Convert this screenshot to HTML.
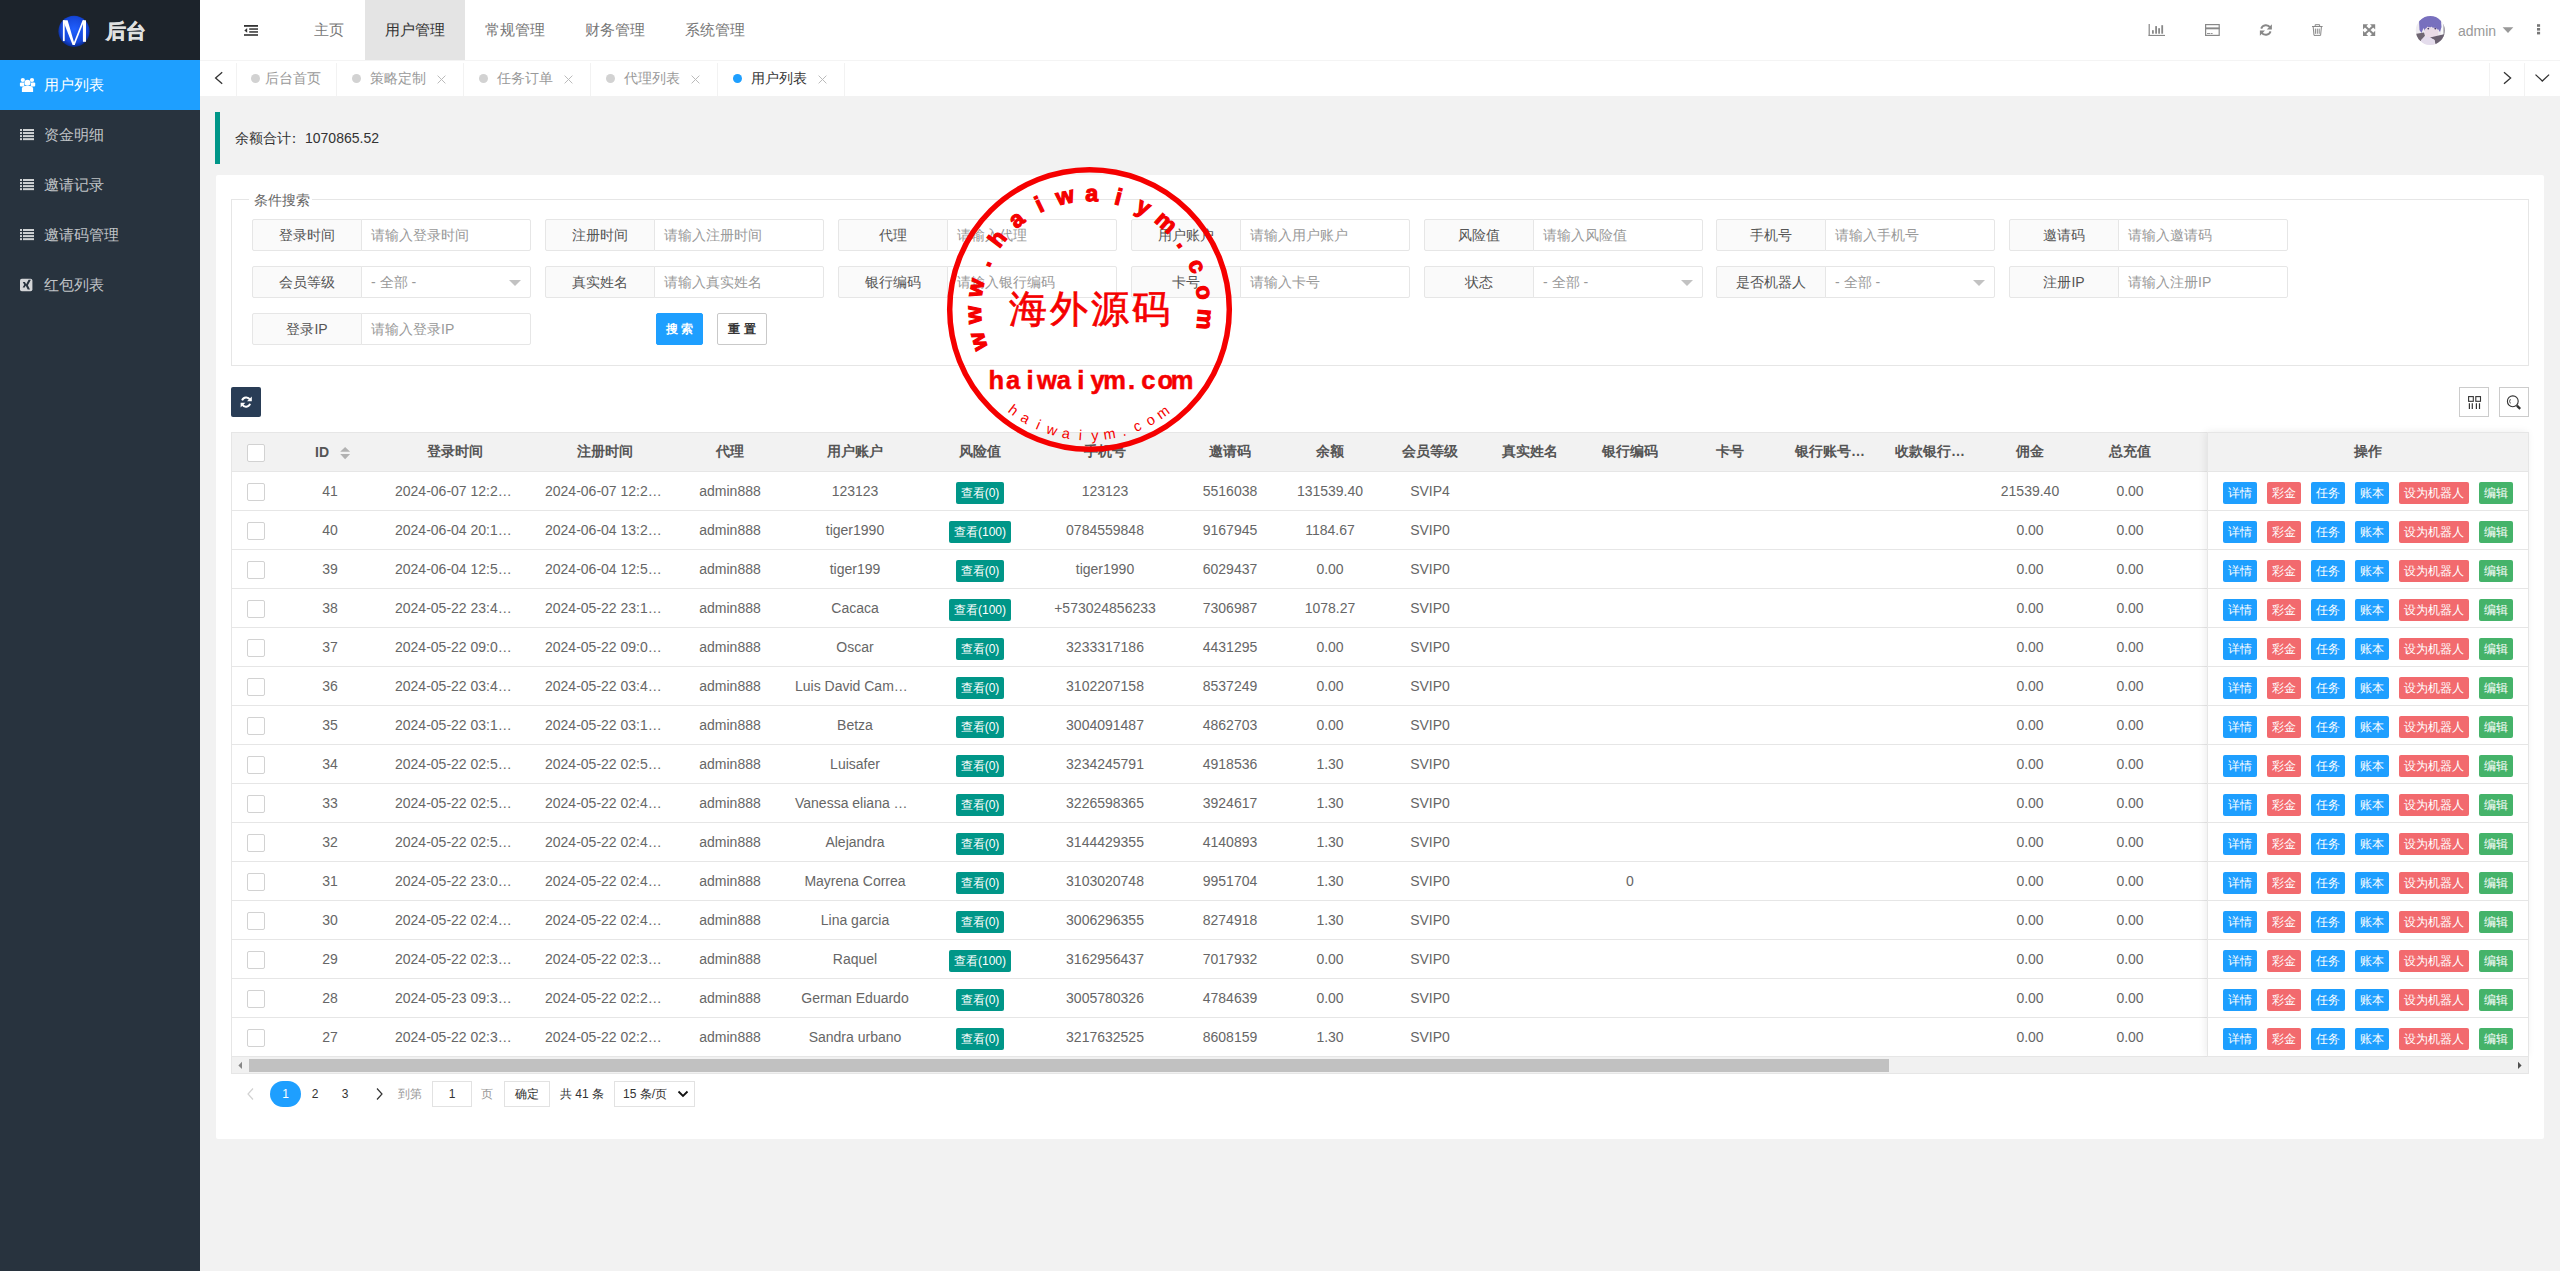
<!DOCTYPE html>
<html><head><meta charset="utf-8"><style>
*{box-sizing:border-box;margin:0;padding:0}
html,body{width:2560px;height:1271px;overflow:hidden}
body{background:#f2f2f2;font-family:"Liberation Sans",sans-serif;font-size:14px;color:#666;position:relative}
.a{position:absolute}
#side{left:0;top:0;width:200px;height:1271px;background:#28333e}
#logo{left:0;top:0;width:200px;height:60px;background:#1c232b}
#logot{left:106px;top:17px;font-size:20px;font-weight:bold;color:#e0e0e0;line-height:28px;-webkit-text-stroke:0.6px #e0e0e0}
.mi{position:absolute;left:0;width:200px;height:50px;color:rgba(255,255,255,.72);font-size:15px;line-height:50px}
.mi span{position:absolute;left:44px;top:0}
.mi svg{position:absolute;left:0;top:0}
.mi.on{background:#1e9fff;color:#fff}
#hdr{left:200px;top:0;width:2360px;height:61px;background:#fff;border-bottom:1px solid #f4f4f4}
.nav{position:absolute;top:0;height:60px;line-height:60px;font-size:15px;color:#777;text-align:center}
.nav.on{background:#e4e4e4;color:#333}
#tabs{left:200px;top:61px;width:2360px;height:35px;background:#fff}
.tsep{position:absolute;top:2px;width:1px;height:33px;background:#f2f2f2}
.tt{position:absolute;top:-1px;line-height:36px;font-size:14px;color:#999;white-space:nowrap}
.td{position:absolute;top:14px;width:9px;height:9px;border-radius:50%;background:#d2d2d2}
#quote{left:215px;top:112px;width:2330px;height:52px;border-left:5px solid #009688;background:#f2f2f2;color:#333;font-size:14px;line-height:52px;padding-left:15px}
#card{left:216px;top:175px;width:2328px;height:964px;background:#fff;border-radius:2px}
#fs{left:231px;top:199px;width:2298px;height:167px;border:1px solid #e6e6e6}
#legend{left:249px;top:190px;padding:0 2px 0 5px;background:#fff;font-size:14px;color:#666;line-height:20px}
.grp{position:absolute;width:279px;height:32px}
.lb{position:absolute;left:0;top:0;width:110px;height:32px;border:1px solid #e6e6e6;background:#fafafa;text-align:center;line-height:30px;color:#555;border-radius:2px 0 0 2px}
.in{position:absolute;left:109px;top:0;width:170px;height:32px;border:1px solid #e6e6e6;background:#fff;line-height:30px;padding-left:9px;color:#999;border-radius:0 2px 2px 0;white-space:nowrap;overflow:hidden}
.car{position:absolute;right:9px;top:13px;width:0;height:0;border-left:6px solid transparent;border-right:6px solid transparent;border-top:6px solid #c2c2c2}
.btn{position:absolute;height:32px;line-height:30px;text-align:center;font-size:12px;border-radius:2px;font-weight:bold}
.tb{position:absolute;left:232px;width:2296px;overflow:hidden}
.th{position:absolute;height:39px;line-height:39px;text-align:center;font-weight:bold;color:#555;white-space:nowrap}
.tc{position:absolute;height:38px;line-height:38px;text-align:center;color:#666;white-space:nowrap}
.hl{position:absolute;left:0;width:2296px;height:1px;background:#e6e6e6}
.cb{position:absolute;width:18px;height:18px;border:1px solid #d2d2d2;background:#fff;border-radius:2px}
.bdg{position:absolute;height:22px;line-height:22px;font-size:12px;color:#fff;background:#009688;border-radius:2px;text-align:center}
.ob{position:absolute;height:22px;line-height:22px;font-size:12px;color:#fff;border-radius:2px;text-align:center}
.b1{background:#1e9fff}.b2{background:#f26a6e}.b3{background:#45b36a}
</style></head><body>
<div id="side" class="a">
<div id="logo" class="a"></div>
<svg class="a" style="left:56px;top:13px" width="36" height="36" viewBox="0 0 36 36">
<defs><radialGradient id="lg" cx="50%" cy="45%" r="55%"><stop offset="0" stop-color="#2060ff"/><stop offset=".75" stop-color="#1546d8"/><stop offset="1" stop-color="#0a2a8a"/></radialGradient></defs>
<circle cx="18" cy="18.3" r="15.6" fill="url(#lg)"/>
<g fill="#fff"><rect x="6.9" y="7.3" width="1.8" height="20.8"/><path d="M6.9 7.3 L11.6 7.3 L18.8 31.9 L16.6 31.9 Z"/><path d="M16.9 31.9 L18.7 31.9 L28.4 7.3 L26.6 7.3 Z"/><rect x="26.9" y="7.3" width="3.1" height="21.5"/></g>
</svg>
<div id="logot" class="a">后台</div>
<div class="mi on" style="top:60px"><svg width="50" height="50"><g fill="#fff"><circle cx="22.8" cy="80" r="2.1" transform="translate(0,-60)"/><circle cx="32" cy="20" r="2.1"/><circle cx="27.5" cy="22.8" r="3"/><rect x="19.9" y="22.6" width="4.4" height="4" rx="1"/><rect x="30.8" y="22.6" width="4.4" height="4" rx="1"/><path d="M21.9 32 L21.9 28.6 Q22 26.2 24.5 26 L30.5 26 Q33 26.2 33.1 28.6 L33.1 32 Z"/></g></svg><span>用户列表</span></div>
<div class="mi" style="top:110px"><svg width="50" height="50"><g fill="rgba(255,255,255,.78)"><rect x="20" y="19.00" width="2" height="2"/><rect x="23" y="19.00" width="11" height="2"/><rect x="20" y="22.05" width="2" height="2"/><rect x="23" y="22.05" width="11" height="2"/><rect x="20" y="25.10" width="2" height="2"/><rect x="23" y="25.10" width="11" height="2"/><rect x="20" y="28.15" width="2" height="2"/><rect x="23" y="28.15" width="11" height="2"/></g></svg><span>资金明细</span></div>
<div class="mi" style="top:160px"><svg width="50" height="50"><g fill="rgba(255,255,255,.78)"><rect x="20" y="19.00" width="2" height="2"/><rect x="23" y="19.00" width="11" height="2"/><rect x="20" y="22.05" width="2" height="2"/><rect x="23" y="22.05" width="11" height="2"/><rect x="20" y="25.10" width="2" height="2"/><rect x="23" y="25.10" width="11" height="2"/><rect x="20" y="28.15" width="2" height="2"/><rect x="23" y="28.15" width="11" height="2"/></g></svg><span>邀请记录</span></div>
<div class="mi" style="top:210px"><svg width="50" height="50"><g fill="rgba(255,255,255,.78)"><rect x="20" y="19.00" width="2" height="2"/><rect x="23" y="19.00" width="11" height="2"/><rect x="20" y="22.05" width="2" height="2"/><rect x="23" y="22.05" width="11" height="2"/><rect x="20" y="25.10" width="2" height="2"/><rect x="23" y="25.10" width="11" height="2"/><rect x="20" y="28.15" width="2" height="2"/><rect x="23" y="28.15" width="11" height="2"/></g></svg><span>邀请码管理</span></div>
<div class="mi" style="top:260px"><svg width="50" height="50"><rect x="20" y="18.8" width="12.4" height="12.4" rx="1.8" fill="rgba(255,255,255,.8)"/><path d="M22.8 22 L24.9 22 L26.3 24.6 L24.7 27.6 L22.6 27.6 L24.2 24.7 Z M28.6 19.8 L30.9 19.8 L27.9 25.2 L30 29.4 L27.7 29.4 L25.6 25.2 Z" fill="#28333e"/></svg><span>红包列表</span></div>
</div>
<div id="hdr" class="a">
<svg class="a" style="left:40px;top:20px" width="24" height="20"><g fill="#333"><rect x="4" y="5" width="14" height="1.8"/><rect x="9.2" y="8.3" width="8.8" height="1.5"/><rect x="9.2" y="11.2" width="8.8" height="1.5"/><rect x="4" y="14.2" width="14" height="1.6"/><path d="M7.2 8.1 L7.2 12.8 L4.3 10.45 Z"/></g></svg>
<div class="nav" style="left:93px;width:72px">主页</div>
<div class="nav on" style="left:165px;width:100px">用户管理</div>
<div class="nav" style="left:265px;width:100px">常规管理</div>
<div class="nav" style="left:365px;width:100px">财务管理</div>
<div class="nav" style="left:465px;width:100px">系统管理</div>
<svg class="a" style="left:1940px;top:15px" width="420" height="32" viewBox="2140 15 420 32">
<g fill="#888">
<rect x="2148.6" y="24" width="1.2" height="12"/><rect x="2148.6" y="34.9" width="16.4" height="1.1"/>
<rect x="2152" y="30.2" width="1.8" height="3.5"/><rect x="2155.2" y="26.1" width="1.8" height="7.6"/><rect x="2158.2" y="28.2" width="1.8" height="5.5"/><rect x="2161.3" y="25.2" width="1.8" height="8.5"/>
</g>
<g fill="none" stroke="#888" stroke-width="1.2">
<rect x="2205.6" y="24.6" width="13.6" height="10.8"/>
</g>
<rect x="2205.2" y="27.4" width="14.4" height="1.9" fill="#888"/>
<rect x="2207" y="33" width="3" height="0.9" fill="#888"/><rect x="2210.6" y="33" width="2" height="0.9" fill="#888"/>
<g fill="none" stroke="#888" stroke-width="1.9">
<path d="M2261.2 28.6 A5 5 0 0 1 2270.2 27.6"/>
<path d="M2270.6 31.4 A5 5 0 0 1 2261.6 32.4"/>
</g>
<path d="M2271.9 24.2 L2271.9 29.4 L2266.8 29.4 Z" fill="#888"/>
<path d="M2259.9 35.8 L2259.9 30.6 L2265 30.6 Z" fill="#888"/>
<g fill="none" stroke="#888" stroke-width="1">
<path d="M2313.2 27 L2314 35.4 L2320.6 35.4 L2321.4 27"/>
<path d="M2312 26.5 L2322.6 26.5"/>
<path d="M2315.2 26.4 L2315.2 24.7 L2319.6 24.7 L2319.6 26.4"/>
<path d="M2315.4 28.6 L2315.4 33.8 M2317.3 28.6 L2317.3 33.8 M2319.2 28.6 L2319.2 33.8"/>
</g>
<g fill="#888">
<path d="M2363 24.2 L2368.2 24.2 L2363 29.4 Z"/><path d="M2375.2 24.2 L2370 24.2 L2375.2 29.4 Z"/><path d="M2363 35.9 L2368.2 35.9 L2363 30.7 Z"/><path d="M2375.2 35.9 L2370 35.9 L2375.2 30.7 Z"/>
<path d="M2364.6 25.8 L2373.6 34.3 M2373.6 25.8 L2364.6 34.3" stroke="#888" stroke-width="2"/>
</g>
<defs><clipPath id="av"><circle cx="2430.3" cy="30.6" r="14.5"/></clipPath>
<linearGradient id="avg" x1="0" y1="0" x2="0" y2="1"><stop offset="0" stop-color="#5a55b8"/><stop offset=".45" stop-color="#7068c0"/><stop offset=".55" stop-color="#e8dde6"/><stop offset="1" stop-color="#f4f0f4"/></linearGradient></defs>
<g clip-path="url(#av)">
<rect x="2414" y="14" width="34" height="34" fill="#eeebf0"/>
<path d="M2441.0 23.0 2445.0 23.0 2445.0 35.0 2441.0 35.0 Z" fill="#f8f8fa"/>
<path d="M2443.5 24.0 2445.0 24.0 2445.0 37.0 2443.5 37.0 Z" fill="#8a8590"/>
<path d="M2419.0 21.0 2424.0 16.5 2430.0 15.5 2437.0 16.5 2441.0 21.0 2441.5 27.0 2440.0 32.0 2438.0 29.0 2437.0 31.5 2435.5 27.5 2433.5 30.0 2431.5 26.5 2429.5 29.5 2427.5 26.5 2425.0 31.0 2423.5 28.0 2421.5 33.0 2419.5 30.0 Z" fill="#7870be"/>
<path d="M2425.0 29.0 2428.0 27.0 2432.0 27.5 2436.0 28.0 2438.5 30.5 2438.0 36.0 2433.0 39.0 2427.0 38.0 2424.5 34.0 Z" fill="#e9dbe6"/>
<circle cx="2428.3" cy="28.6" r="0.9" fill="#4a3f6a"/><circle cx="2435.3" cy="28.6" r="0.9" fill="#4a3f6a"/>
<path d="M2415.0 34.0 2424.0 32.5 2425.0 36.0 2421.0 41.0 2416.0 40.0 Z" fill="#6f6672"/>
<path d="M2430.0 37.5 2445.0 34.0 2445.0 41.0 2436.0 46.0 2434.5 40.0 Z" fill="#6a6070"/>
<path d="M2421.0 40.0 2425.0 36.0 2430.0 37.5 2434.5 40.0 2435.0 46.0 2421.0 46.0 Z" fill="#e4dcec"/>
</g>
<path d="M2502.6 27.3 L2513.3 27.3 L2508 32.9 Z" fill="#999"/>
<g fill="#777"><rect x="2537" y="24.2" width="3.1" height="2.6"/><rect x="2537" y="28" width="3.1" height="2.6"/><rect x="2537" y="31.8" width="3.1" height="2.6"/></g>
</svg>
<div class="a" style="left:2258px;top:21px;font-size:14px;color:#999;line-height:20px">admin</div>
</div>
<div id="tabs" class="a">
<svg class="a" style="left:10px;top:7px" width="20" height="20"><path d="M12.2 4.3 L5.6 10 L12.2 15.7" fill="none" stroke="#333" stroke-width="1.3"/></svg>
<div class="tsep" style="left:36px"></div>
<div class="tsep" style="left:136px"></div>
<div class="tsep" style="left:263px"></div>
<div class="tsep" style="left:390px"></div>
<div class="tsep" style="left:517px"></div>
<div class="tsep" style="left:644px"></div>
<div class="td" style="left:51px;top:13px;"></div>
<div class="tt" style="left:65px;">后台首页</div>
<div class="td" style="left:152px;top:13px;"></div>
<div class="tt" style="left:170px;">策略定制</div>
<svg class="a" style="left:237px;top:14px" width="9" height="9"><path d="M0.6 0.6 L8.4 8.4 M8.4 0.6 L0.6 8.4" stroke="#bbb" stroke-width="1"/></svg>
<div class="td" style="left:279px;top:13px;"></div>
<div class="tt" style="left:297px;">任务订单</div>
<svg class="a" style="left:364px;top:14px" width="9" height="9"><path d="M0.6 0.6 L8.4 8.4 M8.4 0.6 L0.6 8.4" stroke="#bbb" stroke-width="1"/></svg>
<div class="td" style="left:406px;top:13px;"></div>
<div class="tt" style="left:424px;">代理列表</div>
<svg class="a" style="left:491px;top:14px" width="9" height="9"><path d="M0.6 0.6 L8.4 8.4 M8.4 0.6 L0.6 8.4" stroke="#bbb" stroke-width="1"/></svg>
<div class="td" style="left:533px;top:13px;background:#1e9fff"></div>
<div class="tt" style="left:551px;color:#333">用户列表</div>
<svg class="a" style="left:618px;top:14px" width="9" height="9"><path d="M0.6 0.6 L8.4 8.4 M8.4 0.6 L0.6 8.4" stroke="#bbb" stroke-width="1"/></svg>
<div class="tsep" style="left:2289px"></div><div class="tsep" style="left:2324px"></div>
<svg class="a" style="left:2297px;top:7px" width="20" height="20"><path d="M7 4.3 L13.6 10 L7 15.7" fill="none" stroke="#333" stroke-width="1.3"/></svg>
<svg class="a" style="left:2332px;top:7px" width="20" height="20"><path d="M3.5 6.6 L10.3 13 L17.1 6.6" fill="none" stroke="#333" stroke-width="1.3"/></svg>
</div>
<div id="quote" class="a">余额合计<span style="position:relative;left:-4px">：</span>1070865.52</div>
<div id="card" class="a"></div>
<div id="fs" class="a"></div>
<div id="legend" class="a">条件搜索</div>
<div class="grp" style="left:252px;top:219px"><div class="lb">登录时间</div><div class="in">请输入登录时间</div></div>
<div class="grp" style="left:545px;top:219px"><div class="lb">注册时间</div><div class="in">请输入注册时间</div></div>
<div class="grp" style="left:838px;top:219px"><div class="lb">代理</div><div class="in">请输入代理</div></div>
<div class="grp" style="left:1131px;top:219px"><div class="lb">用户账户</div><div class="in">请输入用户账户</div></div>
<div class="grp" style="left:1424px;top:219px"><div class="lb">风险值</div><div class="in">请输入风险值</div></div>
<div class="grp" style="left:1716px;top:219px"><div class="lb">手机号</div><div class="in">请输入手机号</div></div>
<div class="grp" style="left:2009px;top:219px"><div class="lb">邀请码</div><div class="in">请输入邀请码</div></div>
<div class="grp" style="left:252px;top:266px"><div class="lb">会员等级</div><div class="in">- 全部 -<i class=car></i></div></div>
<div class="grp" style="left:545px;top:266px"><div class="lb">真实姓名</div><div class="in">请输入真实姓名</div></div>
<div class="grp" style="left:838px;top:266px"><div class="lb">银行编码</div><div class="in">请输入银行编码</div></div>
<div class="grp" style="left:1131px;top:266px"><div class="lb">卡号</div><div class="in">请输入卡号</div></div>
<div class="grp" style="left:1424px;top:266px"><div class="lb">状态</div><div class="in">- 全部 -<i class=car></i></div></div>
<div class="grp" style="left:1716px;top:266px"><div class="lb">是否机器人</div><div class="in">- 全部 -<i class=car></i></div></div>
<div class="grp" style="left:2009px;top:266px"><div class="lb">注册IP</div><div class="in">请输入注册IP</div></div>
<div class="grp" style="left:252px;top:313px"><div class="lb">登录IP</div><div class="in">请输入登录IP</div></div>
<div class="btn" style="left:656px;top:313px;width:47px;background:#1e9fff;color:#fff;border:1px solid #1e9fff">搜 索</div>
<div class="btn" style="left:717px;top:313px;width:50px;background:#fff;color:#333;border:1px solid #c9c9c9">重 置</div>
<div class="a" style="left:231px;top:387px;width:30px;height:30px;background:#293d56;border-radius:2px"></div>
<svg class="a" style="left:231px;top:387px" width="30" height="30"><g fill="none" stroke="#fff" stroke-width="1.9"><path d="M11.1 13.4 A4.4 4.4 0 0 1 19 12.6"/><path d="M19.1 16.8 A4.4 4.4 0 0 1 11.2 17.6"/></g><path d="M20.8 9.4 L20.8 14.2 L16 14.2 Z" fill="#fff"/><path d="M9.6 20.6 L9.6 15.8 L14.4 15.8 Z" fill="#fff"/></svg>
<div class="a" style="left:2459px;top:387px;width:30px;height:30px;border:1px solid #ccc"></div>
<div class="a" style="left:2499px;top:387px;width:30px;height:30px;border:1px solid #ccc"></div>
<svg class="a" style="left:2459px;top:387px" width="30" height="30"><g fill="none" stroke="#333" stroke-width="1.1"><rect x="9.6" y="9.6" width="4.7" height="4.7"/><rect x="16.8" y="9.6" width="4.7" height="4.7"/><path d="M10.4 16.3 L10.4 21.9 M13.3 16.3 L13.3 21.9 M17.4 16.3 L17.4 21.9 M20.5 16.3 L20.5 21.9" stroke-width="1.2"/></g></svg>
<svg class="a" style="left:2499px;top:387px" width="30" height="30"><g fill="none" stroke="#333" stroke-width="1.1"><circle cx="13.8" cy="14.3" r="5.4"/><path d="M17.9 18.6 L21.2 21.8" stroke-width="2.4"/><path d="M11.4 12.2 A3.4 3.4 0 0 0 11.4 16.4" stroke-width="0.9"/></g></svg>
<div class="a" style="left:232px;top:432px;width:2296px;height:641px;border:1px solid #e6e6e6;border-top:none;border-left:none"></div>
<div class="a" style="left:231px;top:432px;width:1px;height:642px;background:#e6e6e6"></div>
<div class="a" style="left:232px;top:432px;width:2296px;height:39px;background:#f2f2f2"></div>
<div class="a" style="left:232px;top:432px;width:2296px;height:1px;background:#e6e6e6"></div>
<div class="cb" style="left:247px;top:444px"></div>
<div class="th" style="left:280px;top:433px;width:100px;padding-right:16px">ID</div>
<svg class="a" style="left:339px;top:446px" width="13" height="14"><path d="M1.2 5.8 L6.1 1 L11.1 5.8 Z M1.2 8 L11.1 8 L6.1 13.3 Z" fill="#b2b2b2"/></svg>
<div class="th" style="left:380px;top:432px;width:150px">登录时间</div>
<div class="th" style="left:530px;top:432px;width:150px">注册时间</div>
<div class="th" style="left:680px;top:432px;width:100px">代理</div>
<div class="th" style="left:780px;top:432px;width:150px">用户账户</div>
<div class="th" style="left:930px;top:432px;width:100px">风险值</div>
<div class="th" style="left:1030px;top:432px;width:150px">手机号</div>
<div class="th" style="left:1180px;top:432px;width:100px">邀请码</div>
<div class="th" style="left:1280px;top:432px;width:100px">余额</div>
<div class="th" style="left:1380px;top:432px;width:100px">会员等级</div>
<div class="th" style="left:1480px;top:432px;width:100px">真实姓名</div>
<div class="th" style="left:1580px;top:432px;width:100px">银行编码</div>
<div class="th" style="left:1680px;top:432px;width:100px">卡号</div>
<div class="th" style="left:1780px;top:432px;width:100px">银行账号…</div>
<div class="th" style="left:1880px;top:432px;width:100px">收款银行…</div>
<div class="th" style="left:1980px;top:432px;width:100px">佣金</div>
<div class="th" style="left:2080px;top:432px;width:100px">总充值</div>
<div class="hl" style="left:232px;top:471px"></div>
<div class="cb" style="left:247px;top:483px"></div>
<div class="tc" style="left:280px;top:472px;width:100px">41</div>
<div class="tc" style="left:380px;top:472px;width:150px;text-align:left;padding-left:15px">2024-06-07 12:2…</div>
<div class="tc" style="left:530px;top:472px;width:150px;text-align:left;padding-left:15px">2024-06-07 12:2…</div>
<div class="tc" style="left:680px;top:472px;width:100px">admin888</div>
<div class="tc" style="left:780px;top:472px;width:150px">123123</div>
<div class="tc" style="left:1030px;top:472px;width:150px">123123</div>
<div class="tc" style="left:1180px;top:472px;width:100px">5516038</div>
<div class="tc" style="left:1280px;top:472px;width:100px">131539.40</div>
<div class="tc" style="left:1380px;top:472px;width:100px">SVIP4</div>
<div class="tc" style="left:1980px;top:472px;width:100px">21539.40</div>
<div class="tc" style="left:2080px;top:472px;width:100px">0.00</div>
<div class="bdg" style="left:956px;top:482px;width:48px">查看(0)</div>
<div class="hl" style="left:232px;top:510px"></div>
<div class="cb" style="left:247px;top:522px"></div>
<div class="tc" style="left:280px;top:511px;width:100px">40</div>
<div class="tc" style="left:380px;top:511px;width:150px;text-align:left;padding-left:15px">2024-06-04 20:1…</div>
<div class="tc" style="left:530px;top:511px;width:150px;text-align:left;padding-left:15px">2024-06-04 13:2…</div>
<div class="tc" style="left:680px;top:511px;width:100px">admin888</div>
<div class="tc" style="left:780px;top:511px;width:150px">tiger1990</div>
<div class="tc" style="left:1030px;top:511px;width:150px">0784559848</div>
<div class="tc" style="left:1180px;top:511px;width:100px">9167945</div>
<div class="tc" style="left:1280px;top:511px;width:100px">1184.67</div>
<div class="tc" style="left:1380px;top:511px;width:100px">SVIP0</div>
<div class="tc" style="left:1980px;top:511px;width:100px">0.00</div>
<div class="tc" style="left:2080px;top:511px;width:100px">0.00</div>
<div class="bdg" style="left:949px;top:521px;width:62px">查看(100)</div>
<div class="hl" style="left:232px;top:549px"></div>
<div class="cb" style="left:247px;top:561px"></div>
<div class="tc" style="left:280px;top:550px;width:100px">39</div>
<div class="tc" style="left:380px;top:550px;width:150px;text-align:left;padding-left:15px">2024-06-04 12:5…</div>
<div class="tc" style="left:530px;top:550px;width:150px;text-align:left;padding-left:15px">2024-06-04 12:5…</div>
<div class="tc" style="left:680px;top:550px;width:100px">admin888</div>
<div class="tc" style="left:780px;top:550px;width:150px">tiger199</div>
<div class="tc" style="left:1030px;top:550px;width:150px">tiger1990</div>
<div class="tc" style="left:1180px;top:550px;width:100px">6029437</div>
<div class="tc" style="left:1280px;top:550px;width:100px">0.00</div>
<div class="tc" style="left:1380px;top:550px;width:100px">SVIP0</div>
<div class="tc" style="left:1980px;top:550px;width:100px">0.00</div>
<div class="tc" style="left:2080px;top:550px;width:100px">0.00</div>
<div class="bdg" style="left:956px;top:560px;width:48px">查看(0)</div>
<div class="hl" style="left:232px;top:588px"></div>
<div class="cb" style="left:247px;top:600px"></div>
<div class="tc" style="left:280px;top:589px;width:100px">38</div>
<div class="tc" style="left:380px;top:589px;width:150px;text-align:left;padding-left:15px">2024-05-22 23:4…</div>
<div class="tc" style="left:530px;top:589px;width:150px;text-align:left;padding-left:15px">2024-05-22 23:1…</div>
<div class="tc" style="left:680px;top:589px;width:100px">admin888</div>
<div class="tc" style="left:780px;top:589px;width:150px">Cacaca</div>
<div class="tc" style="left:1030px;top:589px;width:150px">+573024856233</div>
<div class="tc" style="left:1180px;top:589px;width:100px">7306987</div>
<div class="tc" style="left:1280px;top:589px;width:100px">1078.27</div>
<div class="tc" style="left:1380px;top:589px;width:100px">SVIP0</div>
<div class="tc" style="left:1980px;top:589px;width:100px">0.00</div>
<div class="tc" style="left:2080px;top:589px;width:100px">0.00</div>
<div class="bdg" style="left:949px;top:599px;width:62px">查看(100)</div>
<div class="hl" style="left:232px;top:627px"></div>
<div class="cb" style="left:247px;top:639px"></div>
<div class="tc" style="left:280px;top:628px;width:100px">37</div>
<div class="tc" style="left:380px;top:628px;width:150px;text-align:left;padding-left:15px">2024-05-22 09:0…</div>
<div class="tc" style="left:530px;top:628px;width:150px;text-align:left;padding-left:15px">2024-05-22 09:0…</div>
<div class="tc" style="left:680px;top:628px;width:100px">admin888</div>
<div class="tc" style="left:780px;top:628px;width:150px">Oscar</div>
<div class="tc" style="left:1030px;top:628px;width:150px">3233317186</div>
<div class="tc" style="left:1180px;top:628px;width:100px">4431295</div>
<div class="tc" style="left:1280px;top:628px;width:100px">0.00</div>
<div class="tc" style="left:1380px;top:628px;width:100px">SVIP0</div>
<div class="tc" style="left:1980px;top:628px;width:100px">0.00</div>
<div class="tc" style="left:2080px;top:628px;width:100px">0.00</div>
<div class="bdg" style="left:956px;top:638px;width:48px">查看(0)</div>
<div class="hl" style="left:232px;top:666px"></div>
<div class="cb" style="left:247px;top:678px"></div>
<div class="tc" style="left:280px;top:667px;width:100px">36</div>
<div class="tc" style="left:380px;top:667px;width:150px;text-align:left;padding-left:15px">2024-05-22 03:4…</div>
<div class="tc" style="left:530px;top:667px;width:150px;text-align:left;padding-left:15px">2024-05-22 03:4…</div>
<div class="tc" style="left:680px;top:667px;width:100px">admin888</div>
<div class="tc" style="left:780px;top:667px;width:150px;text-align:left;padding-left:15px">Luis David Cam…</div>
<div class="tc" style="left:1030px;top:667px;width:150px">3102207158</div>
<div class="tc" style="left:1180px;top:667px;width:100px">8537249</div>
<div class="tc" style="left:1280px;top:667px;width:100px">0.00</div>
<div class="tc" style="left:1380px;top:667px;width:100px">SVIP0</div>
<div class="tc" style="left:1980px;top:667px;width:100px">0.00</div>
<div class="tc" style="left:2080px;top:667px;width:100px">0.00</div>
<div class="bdg" style="left:956px;top:677px;width:48px">查看(0)</div>
<div class="hl" style="left:232px;top:705px"></div>
<div class="cb" style="left:247px;top:717px"></div>
<div class="tc" style="left:280px;top:706px;width:100px">35</div>
<div class="tc" style="left:380px;top:706px;width:150px;text-align:left;padding-left:15px">2024-05-22 03:1…</div>
<div class="tc" style="left:530px;top:706px;width:150px;text-align:left;padding-left:15px">2024-05-22 03:1…</div>
<div class="tc" style="left:680px;top:706px;width:100px">admin888</div>
<div class="tc" style="left:780px;top:706px;width:150px">Betza</div>
<div class="tc" style="left:1030px;top:706px;width:150px">3004091487</div>
<div class="tc" style="left:1180px;top:706px;width:100px">4862703</div>
<div class="tc" style="left:1280px;top:706px;width:100px">0.00</div>
<div class="tc" style="left:1380px;top:706px;width:100px">SVIP0</div>
<div class="tc" style="left:1980px;top:706px;width:100px">0.00</div>
<div class="tc" style="left:2080px;top:706px;width:100px">0.00</div>
<div class="bdg" style="left:956px;top:716px;width:48px">查看(0)</div>
<div class="hl" style="left:232px;top:744px"></div>
<div class="cb" style="left:247px;top:756px"></div>
<div class="tc" style="left:280px;top:745px;width:100px">34</div>
<div class="tc" style="left:380px;top:745px;width:150px;text-align:left;padding-left:15px">2024-05-22 02:5…</div>
<div class="tc" style="left:530px;top:745px;width:150px;text-align:left;padding-left:15px">2024-05-22 02:5…</div>
<div class="tc" style="left:680px;top:745px;width:100px">admin888</div>
<div class="tc" style="left:780px;top:745px;width:150px">Luisafer</div>
<div class="tc" style="left:1030px;top:745px;width:150px">3234245791</div>
<div class="tc" style="left:1180px;top:745px;width:100px">4918536</div>
<div class="tc" style="left:1280px;top:745px;width:100px">1.30</div>
<div class="tc" style="left:1380px;top:745px;width:100px">SVIP0</div>
<div class="tc" style="left:1980px;top:745px;width:100px">0.00</div>
<div class="tc" style="left:2080px;top:745px;width:100px">0.00</div>
<div class="bdg" style="left:956px;top:755px;width:48px">查看(0)</div>
<div class="hl" style="left:232px;top:783px"></div>
<div class="cb" style="left:247px;top:795px"></div>
<div class="tc" style="left:280px;top:784px;width:100px">33</div>
<div class="tc" style="left:380px;top:784px;width:150px;text-align:left;padding-left:15px">2024-05-22 02:5…</div>
<div class="tc" style="left:530px;top:784px;width:150px;text-align:left;padding-left:15px">2024-05-22 02:4…</div>
<div class="tc" style="left:680px;top:784px;width:100px">admin888</div>
<div class="tc" style="left:780px;top:784px;width:150px;text-align:left;padding-left:15px">Vanessa eliana …</div>
<div class="tc" style="left:1030px;top:784px;width:150px">3226598365</div>
<div class="tc" style="left:1180px;top:784px;width:100px">3924617</div>
<div class="tc" style="left:1280px;top:784px;width:100px">1.30</div>
<div class="tc" style="left:1380px;top:784px;width:100px">SVIP0</div>
<div class="tc" style="left:1980px;top:784px;width:100px">0.00</div>
<div class="tc" style="left:2080px;top:784px;width:100px">0.00</div>
<div class="bdg" style="left:956px;top:794px;width:48px">查看(0)</div>
<div class="hl" style="left:232px;top:822px"></div>
<div class="cb" style="left:247px;top:834px"></div>
<div class="tc" style="left:280px;top:823px;width:100px">32</div>
<div class="tc" style="left:380px;top:823px;width:150px;text-align:left;padding-left:15px">2024-05-22 02:5…</div>
<div class="tc" style="left:530px;top:823px;width:150px;text-align:left;padding-left:15px">2024-05-22 02:4…</div>
<div class="tc" style="left:680px;top:823px;width:100px">admin888</div>
<div class="tc" style="left:780px;top:823px;width:150px">Alejandra</div>
<div class="tc" style="left:1030px;top:823px;width:150px">3144429355</div>
<div class="tc" style="left:1180px;top:823px;width:100px">4140893</div>
<div class="tc" style="left:1280px;top:823px;width:100px">1.30</div>
<div class="tc" style="left:1380px;top:823px;width:100px">SVIP0</div>
<div class="tc" style="left:1980px;top:823px;width:100px">0.00</div>
<div class="tc" style="left:2080px;top:823px;width:100px">0.00</div>
<div class="bdg" style="left:956px;top:833px;width:48px">查看(0)</div>
<div class="hl" style="left:232px;top:861px"></div>
<div class="cb" style="left:247px;top:873px"></div>
<div class="tc" style="left:280px;top:862px;width:100px">31</div>
<div class="tc" style="left:380px;top:862px;width:150px;text-align:left;padding-left:15px">2024-05-22 23:0…</div>
<div class="tc" style="left:530px;top:862px;width:150px;text-align:left;padding-left:15px">2024-05-22 02:4…</div>
<div class="tc" style="left:680px;top:862px;width:100px">admin888</div>
<div class="tc" style="left:780px;top:862px;width:150px">Mayrena Correa</div>
<div class="tc" style="left:1030px;top:862px;width:150px">3103020748</div>
<div class="tc" style="left:1180px;top:862px;width:100px">9951704</div>
<div class="tc" style="left:1280px;top:862px;width:100px">1.30</div>
<div class="tc" style="left:1380px;top:862px;width:100px">SVIP0</div>
<div class="tc" style="left:1580px;top:862px;width:100px">0</div>
<div class="tc" style="left:1980px;top:862px;width:100px">0.00</div>
<div class="tc" style="left:2080px;top:862px;width:100px">0.00</div>
<div class="bdg" style="left:956px;top:872px;width:48px">查看(0)</div>
<div class="hl" style="left:232px;top:900px"></div>
<div class="cb" style="left:247px;top:912px"></div>
<div class="tc" style="left:280px;top:901px;width:100px">30</div>
<div class="tc" style="left:380px;top:901px;width:150px;text-align:left;padding-left:15px">2024-05-22 02:4…</div>
<div class="tc" style="left:530px;top:901px;width:150px;text-align:left;padding-left:15px">2024-05-22 02:4…</div>
<div class="tc" style="left:680px;top:901px;width:100px">admin888</div>
<div class="tc" style="left:780px;top:901px;width:150px">Lina garcia</div>
<div class="tc" style="left:1030px;top:901px;width:150px">3006296355</div>
<div class="tc" style="left:1180px;top:901px;width:100px">8274918</div>
<div class="tc" style="left:1280px;top:901px;width:100px">1.30</div>
<div class="tc" style="left:1380px;top:901px;width:100px">SVIP0</div>
<div class="tc" style="left:1980px;top:901px;width:100px">0.00</div>
<div class="tc" style="left:2080px;top:901px;width:100px">0.00</div>
<div class="bdg" style="left:956px;top:911px;width:48px">查看(0)</div>
<div class="hl" style="left:232px;top:939px"></div>
<div class="cb" style="left:247px;top:951px"></div>
<div class="tc" style="left:280px;top:940px;width:100px">29</div>
<div class="tc" style="left:380px;top:940px;width:150px;text-align:left;padding-left:15px">2024-05-22 02:3…</div>
<div class="tc" style="left:530px;top:940px;width:150px;text-align:left;padding-left:15px">2024-05-22 02:3…</div>
<div class="tc" style="left:680px;top:940px;width:100px">admin888</div>
<div class="tc" style="left:780px;top:940px;width:150px">Raquel</div>
<div class="tc" style="left:1030px;top:940px;width:150px">3162956437</div>
<div class="tc" style="left:1180px;top:940px;width:100px">7017932</div>
<div class="tc" style="left:1280px;top:940px;width:100px">0.00</div>
<div class="tc" style="left:1380px;top:940px;width:100px">SVIP0</div>
<div class="tc" style="left:1980px;top:940px;width:100px">0.00</div>
<div class="tc" style="left:2080px;top:940px;width:100px">0.00</div>
<div class="bdg" style="left:949px;top:950px;width:62px">查看(100)</div>
<div class="hl" style="left:232px;top:978px"></div>
<div class="cb" style="left:247px;top:990px"></div>
<div class="tc" style="left:280px;top:979px;width:100px">28</div>
<div class="tc" style="left:380px;top:979px;width:150px;text-align:left;padding-left:15px">2024-05-23 09:3…</div>
<div class="tc" style="left:530px;top:979px;width:150px;text-align:left;padding-left:15px">2024-05-22 02:2…</div>
<div class="tc" style="left:680px;top:979px;width:100px">admin888</div>
<div class="tc" style="left:780px;top:979px;width:150px">German Eduardo</div>
<div class="tc" style="left:1030px;top:979px;width:150px">3005780326</div>
<div class="tc" style="left:1180px;top:979px;width:100px">4784639</div>
<div class="tc" style="left:1280px;top:979px;width:100px">0.00</div>
<div class="tc" style="left:1380px;top:979px;width:100px">SVIP0</div>
<div class="tc" style="left:1980px;top:979px;width:100px">0.00</div>
<div class="tc" style="left:2080px;top:979px;width:100px">0.00</div>
<div class="bdg" style="left:956px;top:989px;width:48px">查看(0)</div>
<div class="hl" style="left:232px;top:1017px"></div>
<div class="cb" style="left:247px;top:1029px"></div>
<div class="tc" style="left:280px;top:1018px;width:100px">27</div>
<div class="tc" style="left:380px;top:1018px;width:150px;text-align:left;padding-left:15px">2024-05-22 02:3…</div>
<div class="tc" style="left:530px;top:1018px;width:150px;text-align:left;padding-left:15px">2024-05-22 02:2…</div>
<div class="tc" style="left:680px;top:1018px;width:100px">admin888</div>
<div class="tc" style="left:780px;top:1018px;width:150px">Sandra urbano</div>
<div class="tc" style="left:1030px;top:1018px;width:150px">3217632525</div>
<div class="tc" style="left:1180px;top:1018px;width:100px">8608159</div>
<div class="tc" style="left:1280px;top:1018px;width:100px">1.30</div>
<div class="tc" style="left:1380px;top:1018px;width:100px">SVIP0</div>
<div class="tc" style="left:1980px;top:1018px;width:100px">0.00</div>
<div class="tc" style="left:2080px;top:1018px;width:100px">0.00</div>
<div class="bdg" style="left:956px;top:1028px;width:48px">查看(0)</div>
<div class="hl" style="left:232px;top:1056px"></div>
<div class="a" style="left:2207px;top:432px;width:321px;height:624px;background:#fff;box-shadow:-1px 0 8px rgba(0,0,0,.08);border-left:1px solid #e6e6e6"></div>
<div class="a" style="left:2207px;top:432px;width:321px;height:39px;background:#f2f2f2;border-left:1px solid #e6e6e6;border-top:1px solid #e6e6e6"></div>
<div class="th" style="left:2207px;top:432px;width:321px">操作</div>
<div class="a" style="left:2207px;top:471px;width:321px;height:1px;background:#e6e6e6"></div>
<div class="ob b1" style="left:2223px;top:482px;width:34px">详情</div>
<div class="ob b2" style="left:2267px;top:482px;width:34px">彩金</div>
<div class="ob b1" style="left:2311px;top:482px;width:34px">任务</div>
<div class="ob b1" style="left:2355px;top:482px;width:34px">账本</div>
<div class="ob b2" style="left:2399px;top:482px;width:70px">设为机器人</div>
<div class="ob b3" style="left:2479px;top:482px;width:34px">编辑</div>
<div class="a" style="left:2207px;top:510px;width:321px;height:1px;background:#e6e6e6"></div>
<div class="ob b1" style="left:2223px;top:521px;width:34px">详情</div>
<div class="ob b2" style="left:2267px;top:521px;width:34px">彩金</div>
<div class="ob b1" style="left:2311px;top:521px;width:34px">任务</div>
<div class="ob b1" style="left:2355px;top:521px;width:34px">账本</div>
<div class="ob b2" style="left:2399px;top:521px;width:70px">设为机器人</div>
<div class="ob b3" style="left:2479px;top:521px;width:34px">编辑</div>
<div class="a" style="left:2207px;top:549px;width:321px;height:1px;background:#e6e6e6"></div>
<div class="ob b1" style="left:2223px;top:560px;width:34px">详情</div>
<div class="ob b2" style="left:2267px;top:560px;width:34px">彩金</div>
<div class="ob b1" style="left:2311px;top:560px;width:34px">任务</div>
<div class="ob b1" style="left:2355px;top:560px;width:34px">账本</div>
<div class="ob b2" style="left:2399px;top:560px;width:70px">设为机器人</div>
<div class="ob b3" style="left:2479px;top:560px;width:34px">编辑</div>
<div class="a" style="left:2207px;top:588px;width:321px;height:1px;background:#e6e6e6"></div>
<div class="ob b1" style="left:2223px;top:599px;width:34px">详情</div>
<div class="ob b2" style="left:2267px;top:599px;width:34px">彩金</div>
<div class="ob b1" style="left:2311px;top:599px;width:34px">任务</div>
<div class="ob b1" style="left:2355px;top:599px;width:34px">账本</div>
<div class="ob b2" style="left:2399px;top:599px;width:70px">设为机器人</div>
<div class="ob b3" style="left:2479px;top:599px;width:34px">编辑</div>
<div class="a" style="left:2207px;top:627px;width:321px;height:1px;background:#e6e6e6"></div>
<div class="ob b1" style="left:2223px;top:638px;width:34px">详情</div>
<div class="ob b2" style="left:2267px;top:638px;width:34px">彩金</div>
<div class="ob b1" style="left:2311px;top:638px;width:34px">任务</div>
<div class="ob b1" style="left:2355px;top:638px;width:34px">账本</div>
<div class="ob b2" style="left:2399px;top:638px;width:70px">设为机器人</div>
<div class="ob b3" style="left:2479px;top:638px;width:34px">编辑</div>
<div class="a" style="left:2207px;top:666px;width:321px;height:1px;background:#e6e6e6"></div>
<div class="ob b1" style="left:2223px;top:677px;width:34px">详情</div>
<div class="ob b2" style="left:2267px;top:677px;width:34px">彩金</div>
<div class="ob b1" style="left:2311px;top:677px;width:34px">任务</div>
<div class="ob b1" style="left:2355px;top:677px;width:34px">账本</div>
<div class="ob b2" style="left:2399px;top:677px;width:70px">设为机器人</div>
<div class="ob b3" style="left:2479px;top:677px;width:34px">编辑</div>
<div class="a" style="left:2207px;top:705px;width:321px;height:1px;background:#e6e6e6"></div>
<div class="ob b1" style="left:2223px;top:716px;width:34px">详情</div>
<div class="ob b2" style="left:2267px;top:716px;width:34px">彩金</div>
<div class="ob b1" style="left:2311px;top:716px;width:34px">任务</div>
<div class="ob b1" style="left:2355px;top:716px;width:34px">账本</div>
<div class="ob b2" style="left:2399px;top:716px;width:70px">设为机器人</div>
<div class="ob b3" style="left:2479px;top:716px;width:34px">编辑</div>
<div class="a" style="left:2207px;top:744px;width:321px;height:1px;background:#e6e6e6"></div>
<div class="ob b1" style="left:2223px;top:755px;width:34px">详情</div>
<div class="ob b2" style="left:2267px;top:755px;width:34px">彩金</div>
<div class="ob b1" style="left:2311px;top:755px;width:34px">任务</div>
<div class="ob b1" style="left:2355px;top:755px;width:34px">账本</div>
<div class="ob b2" style="left:2399px;top:755px;width:70px">设为机器人</div>
<div class="ob b3" style="left:2479px;top:755px;width:34px">编辑</div>
<div class="a" style="left:2207px;top:783px;width:321px;height:1px;background:#e6e6e6"></div>
<div class="ob b1" style="left:2223px;top:794px;width:34px">详情</div>
<div class="ob b2" style="left:2267px;top:794px;width:34px">彩金</div>
<div class="ob b1" style="left:2311px;top:794px;width:34px">任务</div>
<div class="ob b1" style="left:2355px;top:794px;width:34px">账本</div>
<div class="ob b2" style="left:2399px;top:794px;width:70px">设为机器人</div>
<div class="ob b3" style="left:2479px;top:794px;width:34px">编辑</div>
<div class="a" style="left:2207px;top:822px;width:321px;height:1px;background:#e6e6e6"></div>
<div class="ob b1" style="left:2223px;top:833px;width:34px">详情</div>
<div class="ob b2" style="left:2267px;top:833px;width:34px">彩金</div>
<div class="ob b1" style="left:2311px;top:833px;width:34px">任务</div>
<div class="ob b1" style="left:2355px;top:833px;width:34px">账本</div>
<div class="ob b2" style="left:2399px;top:833px;width:70px">设为机器人</div>
<div class="ob b3" style="left:2479px;top:833px;width:34px">编辑</div>
<div class="a" style="left:2207px;top:861px;width:321px;height:1px;background:#e6e6e6"></div>
<div class="ob b1" style="left:2223px;top:872px;width:34px">详情</div>
<div class="ob b2" style="left:2267px;top:872px;width:34px">彩金</div>
<div class="ob b1" style="left:2311px;top:872px;width:34px">任务</div>
<div class="ob b1" style="left:2355px;top:872px;width:34px">账本</div>
<div class="ob b2" style="left:2399px;top:872px;width:70px">设为机器人</div>
<div class="ob b3" style="left:2479px;top:872px;width:34px">编辑</div>
<div class="a" style="left:2207px;top:900px;width:321px;height:1px;background:#e6e6e6"></div>
<div class="ob b1" style="left:2223px;top:911px;width:34px">详情</div>
<div class="ob b2" style="left:2267px;top:911px;width:34px">彩金</div>
<div class="ob b1" style="left:2311px;top:911px;width:34px">任务</div>
<div class="ob b1" style="left:2355px;top:911px;width:34px">账本</div>
<div class="ob b2" style="left:2399px;top:911px;width:70px">设为机器人</div>
<div class="ob b3" style="left:2479px;top:911px;width:34px">编辑</div>
<div class="a" style="left:2207px;top:939px;width:321px;height:1px;background:#e6e6e6"></div>
<div class="ob b1" style="left:2223px;top:950px;width:34px">详情</div>
<div class="ob b2" style="left:2267px;top:950px;width:34px">彩金</div>
<div class="ob b1" style="left:2311px;top:950px;width:34px">任务</div>
<div class="ob b1" style="left:2355px;top:950px;width:34px">账本</div>
<div class="ob b2" style="left:2399px;top:950px;width:70px">设为机器人</div>
<div class="ob b3" style="left:2479px;top:950px;width:34px">编辑</div>
<div class="a" style="left:2207px;top:978px;width:321px;height:1px;background:#e6e6e6"></div>
<div class="ob b1" style="left:2223px;top:989px;width:34px">详情</div>
<div class="ob b2" style="left:2267px;top:989px;width:34px">彩金</div>
<div class="ob b1" style="left:2311px;top:989px;width:34px">任务</div>
<div class="ob b1" style="left:2355px;top:989px;width:34px">账本</div>
<div class="ob b2" style="left:2399px;top:989px;width:70px">设为机器人</div>
<div class="ob b3" style="left:2479px;top:989px;width:34px">编辑</div>
<div class="a" style="left:2207px;top:1017px;width:321px;height:1px;background:#e6e6e6"></div>
<div class="ob b1" style="left:2223px;top:1028px;width:34px">详情</div>
<div class="ob b2" style="left:2267px;top:1028px;width:34px">彩金</div>
<div class="ob b1" style="left:2311px;top:1028px;width:34px">任务</div>
<div class="ob b1" style="left:2355px;top:1028px;width:34px">账本</div>
<div class="ob b2" style="left:2399px;top:1028px;width:70px">设为机器人</div>
<div class="ob b3" style="left:2479px;top:1028px;width:34px">编辑</div>
<div class="a" style="left:2207px;top:1056px;width:321px;height:1px;background:#e6e6e6"></div>
<div class="a" style="left:232px;top:1057px;width:2296px;height:16px;background:#f1f1f1"></div>
<div class="a" style="left:249px;top:1059px;width:1640px;height:13px;background:#c1c1c1"></div>
<div class="a" style="left:231px;top:1073px;width:2298px;height:1px;background:#e6e6e6"></div>
<div class="a" style="left:2528px;top:432px;width:1px;height:642px;background:#e6e6e6"></div>
<svg class="a" style="left:232px;top:1057px" width="17" height="16"><path d="M10 4.8 L6.4 8.4 L10 12 Z" fill="#888"/></svg>
<svg class="a" style="left:2511px;top:1057px" width="17" height="16"><path d="M7 4.8 L10.6 8.4 L7 12 Z" fill="#505050"/></svg>
<svg class="a" style="left:243px;top:1086px" width="16" height="16"><path d="M10 2.5 L5 8 L10 13.5" fill="none" stroke="#d2d2d2" stroke-width="1.2"/></svg>
<div class="a" style="left:270px;top:1081px;width:31px;height:26px;border-radius:13px;background:#1e9fff;color:#fff;font-size:12px;line-height:26px;text-align:center">1</div>
<div class="a" style="left:305px;top:1081px;width:20px;line-height:26px;font-size:12px;color:#333;text-align:center">2</div>
<div class="a" style="left:335px;top:1081px;width:20px;line-height:26px;font-size:12px;color:#333;text-align:center">3</div>
<svg class="a" style="left:371px;top:1086px" width="16" height="16"><path d="M6 2.5 L11 8 L6 13.5" fill="none" stroke="#333" stroke-width="1.2"/></svg>
<div class="a" style="left:398px;top:1081px;line-height:26px;font-size:12px;color:#999">到第</div>
<div class="a" style="left:432px;top:1081px;width:40px;height:26px;border:1px solid #e2e2e2;line-height:24px;font-size:12px;color:#333;text-align:center">1</div>
<div class="a" style="left:481px;top:1081px;line-height:26px;font-size:12px;color:#999">页</div>
<div class="a" style="left:504px;top:1081px;width:46px;height:26px;border:1px solid #e2e2e2;line-height:24px;font-size:12px;color:#333;text-align:center">确定</div>
<div class="a" style="left:560px;top:1081px;line-height:26px;font-size:12px;color:#333">共 41 条</div>
<div class="a" style="left:614px;top:1081px;width:81px;height:26px;border:1px solid #e2e2e2;line-height:24px;font-size:12px;color:#333;padding-left:8px">15 条/页</div>
<svg class="a" style="left:677px;top:1089px" width="12" height="10"><path d="M1.5 2.5 L6 7 L10.5 2.5" fill="none" stroke="#111" stroke-width="1.8"/></svg><svg class="a" style="left:0;top:0" width="2560" height="1271" viewBox="0 0 2560 1271">
<circle cx="1089.5" cy="309.5" r="139.8" fill="none" stroke="#f50000" stroke-width="5.5"/>
<g fill="#f50000" font-family="Liberation Sans" font-weight="bold" font-size="23" text-anchor="middle" stroke="#f50000" stroke-width="1.2">
<text x="1089.5" y="201.0" transform="rotate(-106.00 1089.5 309.5)">w</text>
<text x="1089.5" y="201.0" transform="rotate(-92.61 1089.5 309.5)">w</text>
<text x="1089.5" y="201.0" transform="rotate(-79.22 1089.5 309.5)">w</text>
<text x="1089.5" y="201.0" transform="rotate(-65.83 1089.5 309.5)">.</text>
<text x="1089.5" y="201.0" transform="rotate(-52.44 1089.5 309.5)">h</text>
<text x="1089.5" y="201.0" transform="rotate(-39.05 1089.5 309.5)">a</text>
<text x="1089.5" y="201.0" transform="rotate(-25.66 1089.5 309.5)">i</text>
<text x="1089.5" y="201.0" transform="rotate(-12.27 1089.5 309.5)">w</text>
<text x="1089.5" y="201.0" transform="rotate(1.12 1089.5 309.5)">a</text>
<text x="1089.5" y="201.0" transform="rotate(14.51 1089.5 309.5)">i</text>
<text x="1089.5" y="201.0" transform="rotate(27.90 1089.5 309.5)">y</text>
<text x="1089.5" y="201.0" transform="rotate(41.29 1089.5 309.5)">m</text>
<text x="1089.5" y="201.0" transform="rotate(54.68 1089.5 309.5)">.</text>
<text x="1089.5" y="201.0" transform="rotate(68.07 1089.5 309.5)">c</text>
<text x="1089.5" y="201.0" transform="rotate(81.46 1089.5 309.5)">o</text>
<text x="1089.5" y="201.0" transform="rotate(94.85 1089.5 309.5)">m</text>
</g>
<g fill="#f50000" font-family="Liberation Sans" font-weight="bold" font-size="25.5" text-anchor="middle" stroke="#f50000" stroke-width="0.5">
<text x="996.3" y="389.2">h</text>
<text x="1013.2" y="389.2">a</text>
<text x="1030.1" y="389.2">i</text>
<text x="1047.0" y="389.2">w</text>
<text x="1063.9" y="389.2">a</text>
<text x="1080.8" y="389.2">i</text>
<text x="1097.7" y="389.2">y</text>
<text x="1114.6" y="389.2">m</text>
<text x="1131.5" y="389.2">.</text>
<text x="1148.4" y="389.2">c</text>
<text x="1165.3" y="389.2">o</text>
<text x="1182.2" y="389.2">m</text>
</g>
<text x="1090.5" y="322" fill="#f50000" font-family="Liberation Serif" font-size="38" letter-spacing="3" text-anchor="middle" stroke="#f50000" stroke-width="0.7">海外源码</text>
<g fill="#f50000" font-family="Liberation Sans" font-size="14.5" text-anchor="middle">
<text x="1089.5" y="440.5" transform="rotate(37.10 1089.5 309.5)">h</text>
<text x="1089.5" y="440.5" transform="rotate(30.50 1089.5 309.5)">a</text>
<text x="1089.5" y="440.5" transform="rotate(23.90 1089.5 309.5)">i</text>
<text x="1089.5" y="440.5" transform="rotate(17.30 1089.5 309.5)">w</text>
<text x="1089.5" y="440.5" transform="rotate(10.70 1089.5 309.5)">a</text>
<text x="1089.5" y="440.5" transform="rotate(4.10 1089.5 309.5)">i</text>
<text x="1089.5" y="440.5" transform="rotate(-2.50 1089.5 309.5)">y</text>
<text x="1089.5" y="440.5" transform="rotate(-9.10 1089.5 309.5)">m</text>
<text x="1089.5" y="440.5" transform="rotate(-15.70 1089.5 309.5)">.</text>
<text x="1089.5" y="440.5" transform="rotate(-22.30 1089.5 309.5)">c</text>
<text x="1089.5" y="440.5" transform="rotate(-28.90 1089.5 309.5)">o</text>
<text x="1089.5" y="440.5" transform="rotate(-35.50 1089.5 309.5)">m</text>
</g></svg>
</body></html>
